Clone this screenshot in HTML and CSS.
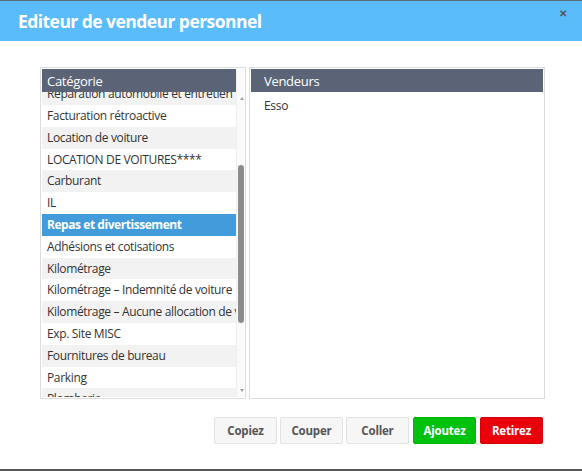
FILE: index.html
```html
<!DOCTYPE html>
<html lang="fr">
<head>
<meta charset="utf-8">
<title>Editeur de vendeur personnel</title>
<link rel="stylesheet" href="styles.css">
</head>
<body>
<div class="dialog">
  <header class="dialog-header">
    <h1 class="dialog-title">Editeur de vendeur personnel</h1>
    <span class="close">&#x2715;</span>
  </header>
  <main class="dialog-body">
    <div class="panels">
      <section class="panel panel-left">
        <div class="panel-head">Catégorie</div>
        <div class="list-wrap">
          <div class="list-viewport">
            <ul class="list">
              <li class="row alt">Réparation automobile et entretien</li>
              <li class="row">Facturation rétroactive</li>
              <li class="row alt">Location de voiture</li>
              <li class="row">LOCATION DE VOITURES****</li>
              <li class="row alt">Carburant</li>
              <li class="row">IL</li>
              <li class="row selected">Repas et divertissement</li>
              <li class="row">Adhésions et cotisations</li>
              <li class="row alt">Kilométrage</li>
              <li class="row">Kilométrage – Indemnité de voiture</li>
              <li class="row alt">Kilométrage – Aucune allocation de voiture</li>
              <li class="row">Exp. Site MISC</li>
              <li class="row alt">Fournitures de bureau</li>
              <li class="row">Parking</li>
              <li class="row alt">Plomberie</li>
            </ul>
          </div>
          <div class="scrollbar">
            <span class="arrow up"></span>
            <span class="thumb"></span>
            <span class="arrow down"></span>
          </div>
        </div>
      </section>
      <section class="panel panel-right">
        <div class="panel-head">Vendeurs</div>
        <ul class="vendors">
          <li class="vendor">Esso</li>
        </ul>
      </section>
    </div>
    <div class="actions">
      <button class="btn">Copiez</button>
      <button class="btn">Couper</button>
      <button class="btn">Coller</button>
      <button class="btn btn-green">Ajoutez</button>
      <button class="btn btn-red">Retirez</button>
    </div>
  </main>
  <div class="bottom-line"></div>
</div>
</body>
</html>
```

FILE: styles.css
```css
* { box-sizing: border-box; }
html, body { margin: 0; padding: 0; }
body {
  font-family: "Open Sans", "Liberation Sans", sans-serif;
  background: #fff;
  color: #333;
  width: 582px;
  height: 471px;
  overflow: hidden;
}
.dialog {
  height: 471px;
  display: flex;
  flex-direction: column;
}
.dialog-header {
  height: 41px;
  background: #5bbcfc;
  border-top: 1px solid #5d6e80;
  position: relative;
  display: flex;
  align-items: center;
  padding-left: 18px;
}
.dialog-title {
  margin: 0;
  color: #fff;
  font-size: 17.5px;
  font-weight: 700;
  letter-spacing: -0.55px;
  margin-top: -1px;
}
.close {
  position: absolute;
  right: 15px;
  top: 5px;
  font-size: 10px;
  font-weight: 700;
  color: #555;
}
.dialog-body {
  flex: 1;
  padding: 26px 0 0 40px;
}
.panels {
  display: flex;
  gap: 3px;
  height: 332px;
}
.panel {
  border: 1px solid #dcdcdc;
  padding: 1px;
  display: flex;
  flex-direction: column;
}
.panel-left { width: 206px; }
.panel-right { width: 296px; }
.panel-head {
  height: 23px;
  background: #5a6476;
  color: #fff;
  font-size: 13px;
  letter-spacing: -0.3px;
  line-height: 24px;
  padding-left: 5px;
  flex: none;
}
.panel-left .panel-head { width: 194px; }
.panel-right .panel-head { padding-left: 13px; }
.list-wrap {
  flex: 1;
  display: flex;
  min-height: 0;
}
.list-viewport {
  width: 194px;
  overflow: hidden;
}
.list {
  list-style: none;
  margin: -8.8px 0 0 0;
  padding: 0;
}
.row {
  height: 21.8px;
  line-height: 22.6px;
  font-size: 12px;
  letter-spacing: -0.35px;
  padding-left: 5px;
  white-space: nowrap;
  overflow: hidden;
  color: #333;
}
.row.alt { background: #f2f2f2; }
.row.selected {
  background: #429cdb;
  color: #fff;
  font-weight: 700;
  letter-spacing: -0.45px;
}
.scrollbar {
  flex: 1;
  position: relative;
  background: #fafafa;
  border-left: 1px solid #f0f0f0;
  margin-top: -23px;
}
.arrow {
  position: absolute;
  left: 3px;
  width: 0;
  height: 0;
  border-left: 2.5px solid transparent;
  border-right: 2.5px solid transparent;
}
.arrow.up { top: 28px; border-bottom: 3px solid #a0a0a0; }
.arrow.down { bottom: 5px; border-top: 3px solid #a0a0a0; }
.thumb {
  position: absolute;
  left: 1px;
  width: 6px;
  top: 96px;
  height: 158px;
  background: #8c8c8c;
  border-radius: 3px;
}
.vendors {
  list-style: none;
  margin: 0;
  padding: 5px 0 0 13px;
}
.vendor {
  font-size: 12px;
  letter-spacing: -0.3px;
  line-height: 18px;
  color: #333;
}
.actions {
  display: flex;
  gap: 3px;
  margin-top: 18px;
  padding-left: 174px;
}
.btn {
  width: 63px;
  height: 27px;
  font-family: "Open Sans", "Liberation Sans", sans-serif;
  font-size: 11.5px;
  font-weight: 700;
  letter-spacing: -0.2px;
  color: #555;
  background: #f6f6f6;
  border: 1px solid #e2e2e2;
  border-radius: 2px;
  padding: 0;
}
.btn-green {
  background: #00c10c;
  border-color: #00b80a;
  color: #fff;
  margin-left: 1px;
}
.btn-red {
  background: #e9000b;
  border-color: #dc0008;
  color: #fff;
  margin-left: 1px;
}
.bottom-line {
  height: 2px;
  background: #555;
}
```
